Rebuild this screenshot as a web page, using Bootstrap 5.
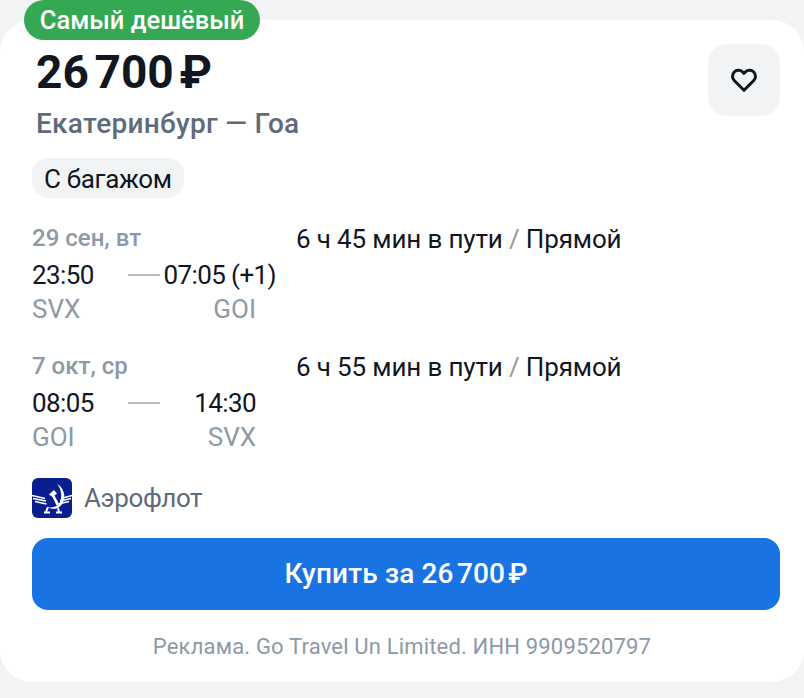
<!DOCTYPE html>
<html lang="ru">
<head>
<meta charset="utf-8">
<title>Самый дешёвый</title>
<link rel="stylesheet" href="https://cdn.jsdelivr.net/npm/bootstrap@5.3.0/dist/css/bootstrap.min.css">
<style>
html,body{height:698px;overflow:hidden}
body{background:#f2f3f5;font-family:Roboto,"Liberation Sans",sans-serif;color:#11161f;padding:20px 0 16px}
.offer{position:relative;background:#fff;border-radius:32px;height:662px;padding:0 24px 0 32px}
.tag{position:absolute;left:24px;top:-20px;height:40px;width:236px;background:#34a853;border-radius:20px;color:#fff;font-size:25.5px;font-weight:500;line-height:40px;text-align:center}
.head{height:120px}
.price{font-size:46px;font-weight:700;line-height:56px;padding:24px 0 0 4px;color:#11161f;letter-spacing:-1px}
.route{font-size:28px;font-weight:500;line-height:32px;color:#5e6b7b;padding:8px 0 0 4px;letter-spacing:.28px}
.fav{width:72px;height:72px;margin-top:24px;background:#f2f3f5;border-radius:20px}
.chip{height:40px;line-height:42px;padding:0 13px 0 12px;background:#f2f3f5;border-radius:16px;font-size:26px;letter-spacing:-.33px;margin-top:18px;width:152px;white-space:nowrap}
.leg{height:128px}
.first{margin-top:20px}
.times{width:224px}
.day{font-size:24px;font-weight:500;color:#8c99a7;line-height:40px}
.clock{font-size:26px;letter-spacing:-.6px;line-height:32px;color:#11161f;margin-top:1px;display:grid;grid-template-columns:96px 32px 96px;align-items:center}
.end{justify-self:end;white-space:nowrap}
.code{font-size:26px;line-height:36px;color:#8c99a7}
.dash{height:2px;background:#b5bec6}
.over{margin-right:-20px}
.info{font-size:26px;letter-spacing:-.15px;line-height:40px;margin-left:40px;padding-top:1px}
.sep{color:#8c99a7}
.carrier{font-size:26px;letter-spacing:-.37px;color:#5e6b7b;line-height:42px;height:40px;margin-top:4px}
.buy{background:#1a73e3;color:#fff;border:0;border-radius:16px;height:72px;font-size:28px;font-weight:500;margin-top:20px;padding:0;width:748px;letter-spacing:.12px}
.buy:hover{background:#1a73e3;color:#fff}
.legal{font-size:22px;line-height:28px;color:#8c99a7;text-align:center;margin-top:23px;letter-spacing:.17px;width:740px}
</style>
</head>
<body>
<div class="offer">
  <div class="tag">Самый дешёвый</div>
  <div class="head d-flex justify-content-between align-items-start">
    <div>
      <div class="price">26&#8239;700&#8239;₽</div>
      <div class="route">Екатеринбург — Гоа</div>
    </div>
    <div class="fav d-flex align-items-center justify-content-center">
      <svg width="30" height="30" viewBox="0 0 32 32" fill="none" stroke="#11161f" stroke-width="3.200" stroke-linejoin="round"><path d="M16 27 5.600 16.600a6.600 6.600 0 0 1 0-9.200 6.300 6.300 0 0 1 9 0L16 9l1.400-1.600a6.300 6.300 0 0 1 9 0 6.600 6.600 0 0 1 0 9.200Z"/></svg>
    </div>
  </div>
  <div class="chip">С багажом</div>
  <div class="leg first d-flex">
    <div class="times">
      <div class="day">29 сен, вт</div>
      <div class="clock"><span>23:50</span><span class="dash"></span><span class="end over">07:05 (+1)</span></div>
      <div class="d-flex justify-content-between code"><span>SVX</span><span>GOI</span></div>
    </div>
    <div class="info">6 ч 45 мин в пути <span class="sep">/</span> Прямой</div>
  </div>
  <div class="leg d-flex">
    <div class="times">
      <div class="day">7 окт, ср</div>
      <div class="clock"><span>08:05</span><span class="dash"></span><span class="end">14:30</span></div>
      <div class="d-flex justify-content-between code"><span>GOI</span><span>SVX</span></div>
    </div>
    <div class="info">6 ч 55 мин в пути <span class="sep">/</span> Прямой</div>
  </div>
  <div class="carrier d-flex align-items-center gap-2">
    <svg width="40" height="40" viewBox="0 0 40 40" class="me-1">
      <rect width="40" height="40" rx="6" fill="#0a1f8f"/>
      <path d="M0 17.500 13 20.500M1 20.500 14 23M3 23.500 14.500 26M40 17.500 29 20.500M39 20.500 28 23M37 23.500 26.500 26" fill="none" stroke="#fff" stroke-width="1.300"/>
      <path d="M25 6C33 10 35 22 28.500 28 24.500 31.500 20 31.500 16 29.500 20 30 25 29 27.500 25 30.500 19 29.500 11 25 6Z" fill="#fff"/>
      <path d="M17 16.500 22 12 25 15.500 22.500 17.500 27 26 24.500 27.500 20.500 19Z" fill="#fff"/>
      <path d="M16 29 14 34M26 30 27 34M12 34.500H18M24 34.500H30" fill="none" stroke="#fff" stroke-width="2"/>
    </svg>
    <span>Аэрофлот</span>
  </div>
  <button type="button" class="btn buy d-block">Купить за 26&#8239;700&#8239;₽</button>
  <div class="legal">Реклама. Go Travel Un Limited. ИНН 9909520797</div>
</div>
</body>
</html>
